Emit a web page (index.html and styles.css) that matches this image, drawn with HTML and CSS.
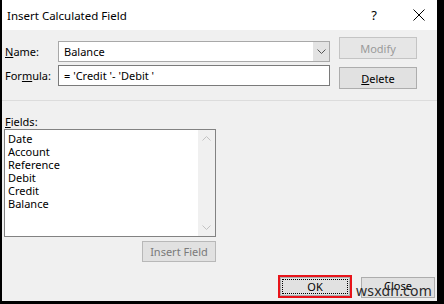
FILE: index.html
```html
<!DOCTYPE html>
<html lang="en">
<head>
    <meta charset="UTF-8">
    <title>Insert Calculated Field</title>
    <link rel="stylesheet" href="styles.css">
</head>
<body>
    <div class="dialog-frame">
        <div class="dialog">
            <div class="title-bar">
                <span class="title-text">Insert Calculated Field</span>
                <span class="title-help">?</span>
                <svg class="title-close" width="12" height="12" viewBox="0 0 12 12">
                    <path d="M0.5 0.5 L11.5 11.5 M11.5 0.5 L0.5 11.5" stroke="#000" stroke-width="1" fill="none"/>
                </svg>
            </div>

            <div class="dialog-body">
                <div class="top-section">
                    <div class="form-rows">
                        <div class="form-row">
                            <label class="form-label"><u>N</u>ame:</label>
                            <div class="combo-box">
                                <span class="field-value">Balance</span>
                                <span class="combo-button">
                                    <svg width="9" height="5" viewBox="0 0 9 5">
                                        <path d="M0.5 0.5 L4.5 4.5 L8.5 0.5" stroke="#555" stroke-width="1" fill="none"/>
                                    </svg>
                                </span>
                            </div>
                        </div>
                        <div class="form-row">
                            <label class="form-label">For<u>m</u>ula:</label>
                            <div class="text-box">
                                <span class="field-value">= 'Credit '- 'Debit '</span>
                            </div>
                        </div>
                    </div>
                    <div class="side-buttons">
                        <button class="win-button disabled">Modify</button>
                        <button class="win-button"><u>D</u>elete</button>
                    </div>
                </div>

                <div class="separator"></div>

                <div class="fields-section">
                    <div class="fields-label"><u>F</u>ields:</div>
                    <div class="list-box">
                        <ul class="list-items">
                            <li>Date</li>
                            <li>Account</li>
                            <li>Reference</li>
                            <li>Debit</li>
                            <li>Credit</li>
                            <li>Balance</li>
                        </ul>
                        <div class="scroll-bar">
                            <svg width="9" height="5" viewBox="0 0 9 5">
                                <path d="M0.5 4.5 L4.5 0.5 L8.5 4.5" stroke="#c2c2c2" stroke-width="1" fill="none"/>
                            </svg>
                            <svg width="9" height="5" viewBox="0 0 9 5">
                                <path d="M0.5 0.5 L4.5 4.5 L8.5 0.5" stroke="#c2c2c2" stroke-width="1" fill="none"/>
                            </svg>
                        </div>
                    </div>
                    <div class="insert-row">
                        <button class="win-button insert-button">Insert Field</button>
                    </div>
                </div>

                <div class="footer-buttons">
                    <div class="highlight-box">
                        <button class="win-button default-button"><span class="focus-rect">OK</span></button>
                    </div>
                    <button class="win-button close-button">Close</button>
                    <span class="watermark">wsxdn.com</span>
                </div>
            </div>
        </div>
    </div>
</body>
</html>
```

FILE: styles.css
```css
body {
    margin: 0;
    background-color: #000;
}

.dialog-frame {
    width: 444px;
    height: 304px;
    box-sizing: border-box;
    border-left: 2px solid #000;
    border-right: 7px solid #000;
    border-bottom: 3px solid #000;
    background-color: #000;
}

.dialog {
    height: 100%;
    display: flex;
    flex-direction: column;
    background-color: #f0f0f0;
    font-family: "Noto Sans", "Open Sans", sans-serif;
    font-size: 11px;
    color: #000;
}

.title-bar {
    height: 30px;
    flex-shrink: 0;
    display: flex;
    align-items: center;
    background-color: #fff;
    padding-left: 5px;
}

.title-text {
    font-size: 11.5px;
    flex-grow: 1;
}

.title-help {
    font-size: 13px;
    margin-right: 36px;
}

.title-close {
    margin-right: 12px;
}

.dialog-body {
    flex-grow: 1;
    display: flex;
    flex-direction: column;
    position: relative;
}

.top-section {
    display: flex;
    padding-left: 3px;
    height: 70px;
}

.form-rows {
    display: flex;
    flex-direction: column;
    gap: 3px;
    padding-top: 11px;
}

.form-row {
    display: flex;
    align-items: center;
}

.form-label {
    width: 53px;
}

.combo-box,
.text-box {
    width: 272px;
    height: 21px;
    box-sizing: border-box;
    border: 1px solid #7a7a7a;
    background-color: #fff;
    display: flex;
    align-items: center;
}

.combo-box {
    border-color: #a8a8a8;
}

.field-value {
    padding-left: 5px;
    flex-grow: 1;
}

.combo-button {
    width: 16px;
    height: 19px;
    background-color: #e3e3e3;
    display: flex;
    align-items: center;
    justify-content: center;
}

.side-buttons {
    display: flex;
    flex-direction: column;
    gap: 8px;
    padding-top: 7px;
    margin-left: 9px;
}

.win-button {
    width: 78px;
    height: 22px;
    box-sizing: border-box;
    border: 1px solid #adadad;
    background-color: #e1e1e1;
    font-family: inherit;
    font-size: 11px;
    color: #000;
    padding: 0;
}

.win-button.disabled {
    color: #9a9a9a;
    border-color: #c4c4c4;
    background-color: #e6e6e6;
}

.separator {
    height: 1px;
    background-color: #dcdcdc;
}

.fields-section {
    padding-left: 2px;
    padding-top: 13px;
    display: flex;
    flex-direction: column;
}

.fields-label {
    padding-left: 1px;
    height: 15px;
}

.list-box {
    width: 212px;
    height: 108px;
    box-sizing: border-box;
    border: 1px solid #828282;
    background-color: #fff;
    display: flex;
}

.list-items {
    list-style: none;
    margin: 0;
    padding: 2px 0 0 3px;
    flex-grow: 1;
    line-height: 13px;
}

.scroll-bar {
    width: 17px;
    background-color: #f0f0f0;
    display: flex;
    flex-direction: column;
    justify-content: space-between;
    align-items: center;
    padding: 6px 0;
}

.insert-row {
    width: 212px;
    display: flex;
    justify-content: flex-end;
    padding-top: 4px;
}

.insert-button {
    width: 74px;
    height: 21px;
    color: #7a7a7a;
    border-color: #b8b8b8;
}

.footer-buttons {
    display: flex;
    justify-content: flex-end;
    align-items: center;
    gap: 9px;
    margin-top: auto;
    margin-bottom: 3px;
    padding-right: 2px;
}

.highlight-box {
    border: 2px solid #e8141a;
    display: flex;
}

.default-button {
    width: 70px;
    height: 19px;
    border: 1px solid #adadad;
    padding: 1px;
}

.focus-rect {
    display: flex;
    align-items: center;
    justify-content: center;
    height: 100%;
    border: 1px dotted #000;
    box-sizing: border-box;
}

.close-button {
    width: 74px;
    height: 21px;
    align-self: flex-end;
    padding-bottom: 6px;
}

.watermark {
    position: absolute;
    right: 5px;
    bottom: 1px;
    font-size: 14px;
    color: #2a2a2a;
    letter-spacing: 0.2px;
}
```
